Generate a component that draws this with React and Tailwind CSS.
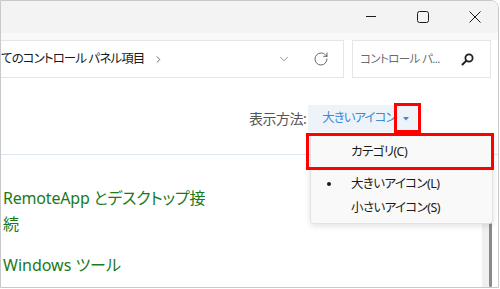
import { ChevronDown, ChevronRight, RotateCw } from "lucide-react";

const jp = "font-['Noto_Sans','Noto_Sans_CJK_JP',sans-serif] [font-feature-settings:'palt']";

function SearchGlyph() {
  return (
    <svg width="13" height="13" viewBox="0 0 13 13" fill="none">
      <circle cx="8" cy="5" r="3.6" stroke="#1f1f1f" strokeWidth="1.8" />
      <path d="M5.4 7.6 L1.5 11.5" stroke="#1f1f1f" strokeWidth="2" strokeLinecap="round" />
    </svg>
  );
}

function TitleBar() {
  return (
    <div className="flex h-[32px] shrink-0 items-center justify-end gap-[40px] bg-[#f3f3f3] pr-[17px]">
      <svg width="12" height="12" viewBox="0 0 12 12">
        <path d="M1 5.5 H11" stroke="#1b1b1b" strokeWidth="1" />
      </svg>
      <svg width="12" height="12" viewBox="0 0 12 12" fill="none">
        <rect x="0.5" y="0.5" width="11" height="11" rx="2" stroke="#1b1b1b" strokeWidth="1" />
      </svg>
      <svg width="12" height="12" viewBox="0 0 12 12">
        <path d="M0.5 0.5 L11.5 11.5 M11.5 0.5 L0.5 11.5" stroke="#1b1b1b" strokeWidth="1" />
      </svg>
    </div>
  );
}

function AddressRow() {
  return (
    <div className="flex h-[38px] shrink-0 gap-[8px] bg-white pr-[7px]">
      <div className="flex w-[343px] items-center border border-l-0 border-[#e5e5e5] pr-[14px]">
        <span className="text-[12.5px] tracking-[-0.9px] text-[#1a1a1a]">てのコントロール パネル項目</span>
        <ChevronRight size={11} strokeWidth={1.6} className="ml-[9px] text-[#333]" />
        <ChevronDown size={14} strokeWidth={1} className="ml-auto text-[#444]" />
        <RotateCw size={16} strokeWidth={1.2} className="ml-[22px] text-[#444]" />
      </div>
      <div className="flex flex-1 items-center border border-[#e5e5e5] pl-[7px] pr-[16px]">
        <span className="text-[11.5px] tracking-[-0.6px] text-[#6b6b6b]">コントロール パ...</span>
        <span className="ml-auto">
          <SearchGlyph />
        </span>
      </div>
    </div>
  );
}

function ViewHeader() {
  return (
    <div className="relative h-[77px] shrink-0 border-b border-[#dde7f4] pl-[248px] pt-[27px]">
      <div className="flex h-[27px] items-center">
        <span className="text-[14px] tracking-[-0.5px] text-[#555]">表示方法:</span>
        <div className="ml-[2px] flex h-[27px] items-center bg-[#eef3fa] pl-[14px] pr-[8px]">
          <span className="text-[12.5px] tracking-[-1px] text-[#3b8ad9]">大きいアイコン</span>
          <svg width="6" height="4" viewBox="0 0 6 4" className="ml-[7px]">
            <path d="M0 0 H6 L3 3.5 Z" fill="#3b8ad9" />
          </svg>
        </div>
      </div>
      <div className="absolute left-[393px] top-[25px] h-[30px] w-[27px] border-[3px] border-[#ff0000]" />
    </div>
  );
}

function ViewMenu() {
  return (
    <div className="absolute left-[310px] top-[134px] w-[183px] rounded-[4px] border border-[#e2e2e2] bg-[#f9f9f9] pb-[3px] pt-[4px] text-[12.5px] tracking-[-0.6px] text-[#1a1a1a] shadow-[0_2px_6px_rgba(0,0,0,0.12)]">
      <div className="flex h-[26px] items-center pl-[40px]">カテゴリ(C)</div>
      <div className="mx-[8px] my-[3px] h-px bg-[#e0e0e0]" />
      <div className="flex h-[24px] items-center">
        <span className="ml-[16px] h-[4px] w-[4px] rounded-full bg-[#1a1a1a]" />
        <span className="ml-[20px]">大きいアイコン(L)</span>
      </div>
      <div className="flex h-[24px] items-center pl-[40px]">小さいアイコン(S)</div>
    </div>
  );
}

export default function App() {
  return (
    <div className={`relative h-[289px] w-[500px] overflow-hidden bg-white ${jp}`}>
      <div className="flex h-[288px] w-[499px] flex-col overflow-hidden rounded-tr-[8px] border border-[#c9c9c9]">
        <TitleBar />
        <div className="h-[7px] shrink-0 bg-[#f9f9f9]" />
        <AddressRow />
        <ViewHeader />
        <div className="flex flex-1">
          <div className="flex-1 pl-[2px] pt-[30px] text-[16px] leading-[26px] text-[#1a7a1a]">
            <div className="tracking-[-0.2px]">
              RemoteApp とデスクトップ接
              <br />
              続
            </div>
            <div className="mt-[15px]">Windows ツール</div>
          </div>
          <div className="relative w-[10px] bg-[#f0f0f0]">
            <div className="absolute bottom-0 right-0 top-[68px] w-[3px] rounded-full bg-[#8a8a8a]" />
          </div>
          <div className="w-[6px]" />
        </div>
      </div>
      <ViewMenu />
      <div className="absolute left-[306px] top-[133px] h-[37px] w-[188px] border-[3px] border-[#ff0000]" />
    </div>
  );
}
